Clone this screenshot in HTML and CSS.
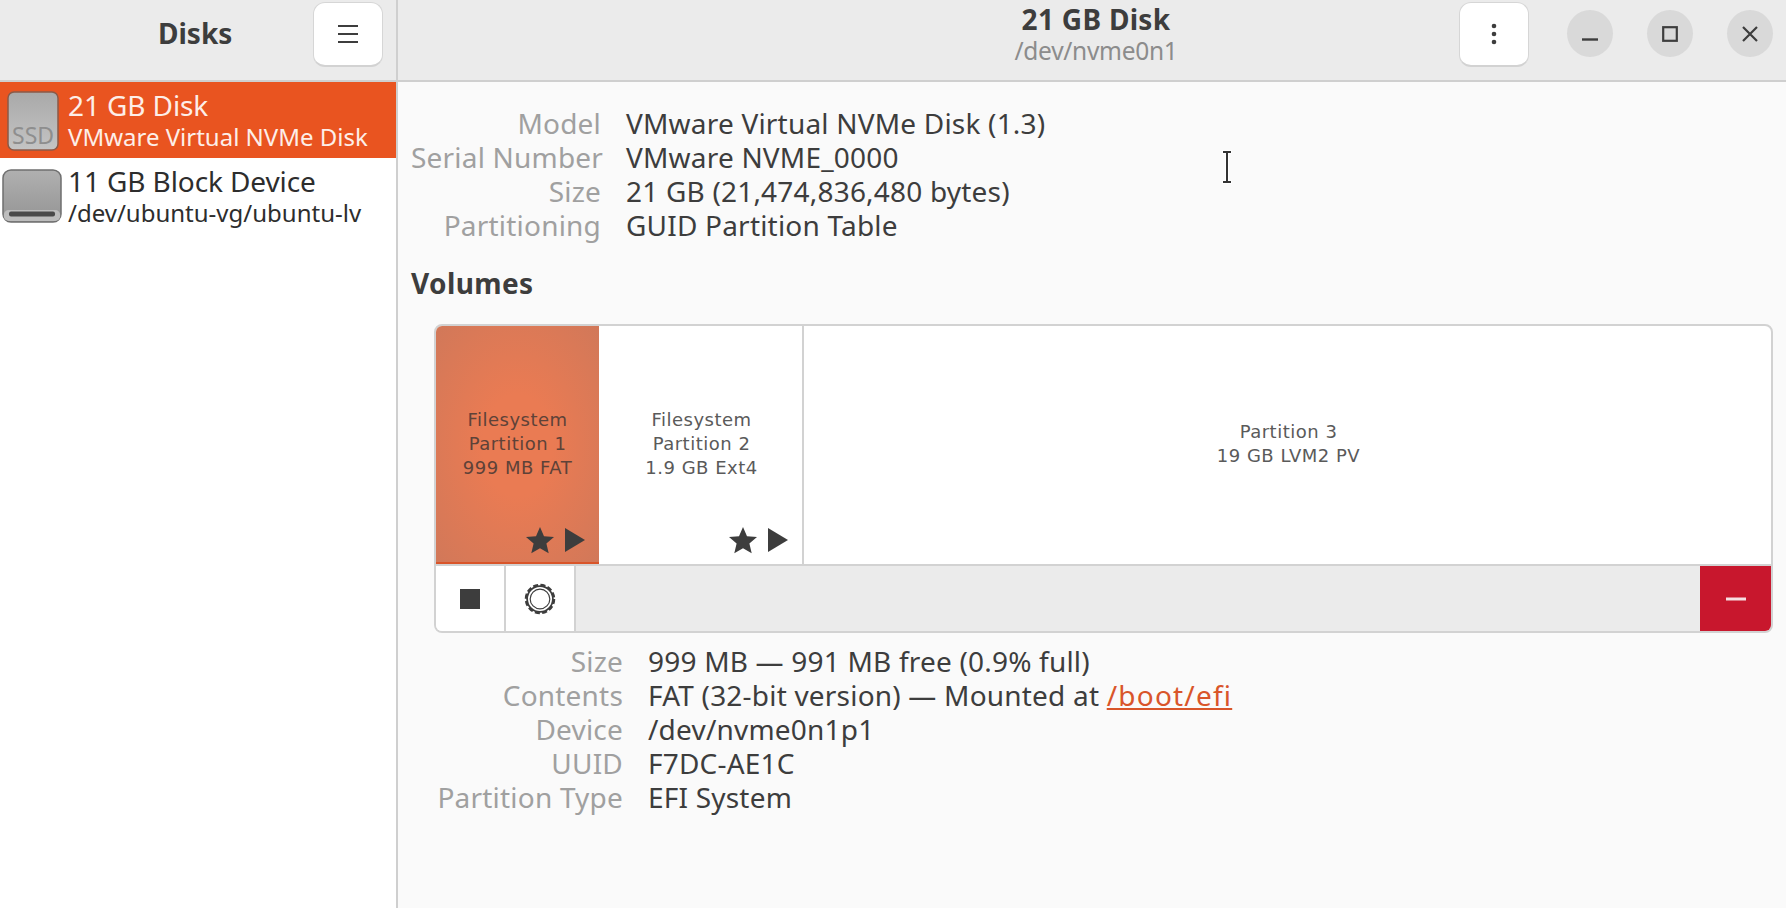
FILE: index.html
```html
<!DOCTYPE html>
<html lang="en">
<head>
<meta charset="utf-8">
<title>Disks</title>
<link rel="stylesheet" href="styles.css">
</head>
<body>
<div class="window">
  <header class="headerbar">
    <div class="head-left">
      <span class="app-title">Disks</span>
      <button class="tool-btn menu-btn" aria-label="Menu">
        <svg width="22" height="20" viewBox="0 0 22 20"><path d="M1 2h20M1 10h20M1 18h20" stroke="#3d3d3d" stroke-width="2.2" fill="none"/></svg>
      </button>
    </div>
    <div class="head-main">
      <div class="head-titles">
        <div class="disk-title">21 GB Disk</div>
        <div class="disk-path">/dev/nvme0n1</div>
      </div>
      <button class="tool-btn kebab-btn" aria-label="More">
        <svg width="6" height="22" viewBox="0 0 6 22"><circle cx="3" cy="3" r="2.3" fill="#3d3d3d"/><circle cx="3" cy="11" r="2.3" fill="#3d3d3d"/><circle cx="3" cy="19" r="2.3" fill="#3d3d3d"/></svg>
      </button>
      <div class="win-controls">
        <span class="win-btn"><svg width="16" height="16" viewBox="0 0 16 16"><path d="M0 13.5h16" stroke="#3d3d3d" stroke-width="2.4"/></svg></span>
        <span class="win-btn"><svg width="16" height="16" viewBox="0 0 16 16"><rect x="1.2" y="1.2" width="13.6" height="13.6" fill="none" stroke="#3d3d3d" stroke-width="2.2"/></svg></span>
        <span class="win-btn"><svg width="16" height="16" viewBox="0 0 16 16"><path d="M1 1l14 14M15 1L1 15" stroke="#3d3d3d" stroke-width="2.2"/></svg></span>
      </div>
    </div>
  </header>
  <div class="body">
    <aside class="sidebar">
      <div class="disk-row selected">
        <svg class="ssd-icon" width="52" height="60" viewBox="0 0 52 60">
          <defs><linearGradient id="ssdg" x1="0" y1="0" x2="0" y2="1"><stop offset="0" stop-color="#a9a9a9"/><stop offset="1" stop-color="#c4c4c4"/></linearGradient></defs>
          <rect x="1" y="1" width="50" height="58" rx="6" fill="url(#ssdg)" stroke="#8a5a48" stroke-width="1.5"/>
        </svg>
        <span class="ssd-label">SSD</span>
        <div class="row-text">
          <div class="row-title">21 GB Disk</div>
          <div class="row-sub">VMware Virtual NVMe Disk</div>
        </div>
      </div>
      <div class="disk-row block">
        <svg class="block-icon" width="60" height="54" viewBox="0 0 60 54">
          <defs><linearGradient id="blkg" x1="0" y1="0" x2="0" y2="1"><stop offset="0" stop-color="#b0b0b0"/><stop offset="1" stop-color="#949494"/></linearGradient></defs>
          <rect x="1" y="1" width="58" height="52" rx="8" fill="url(#blkg)" stroke="#6f6f6f" stroke-width="1.5"/>
          <rect x="1.8" y="41" width="56.4" height="11" rx="5" fill="#bdbdbd"/>
          <rect x="7" y="42.5" width="46" height="5" rx="2" fill="#4a4a4a"/>
        </svg>
        <div class="row-text">
          <div class="row-title">11 GB Block Device</div>
          <div class="row-sub">/dev/ubuntu-vg/ubuntu-lv</div>
        </div>
      </div>
    </aside>
    <main class="content">
      <dl class="props disk-props">
        <dt>Model</dt><dd>VMware Virtual NVMe Disk (1.3)</dd>
        <dt>Serial Number</dt><dd>VMware NVME_0000</dd>
        <dt>Size</dt><dd>21 GB (21,474,836,480 bytes)</dd>
        <dt>Partitioning</dt><dd>GUID Partition Table</dd>
      </dl>
      <h2 class="volumes-title">Volumes</h2>
      <section class="volumes">
        <div class="bars">
          <div class="part part1">
            <div class="part-label">Filesystem<br>Partition 1<br>999 MB FAT</div>
            <div class="part-icons">
              <svg width="30" height="28" viewBox="0 0 30 28"><path d="M15 1l4 9.2 10 .9-7.6 6.5 2.3 9.7L15 22.2 6.300 27.300l2.300-9.700L1 11.100l10-.9z" fill="#3d3d3d"/></svg>
              <svg width="22" height="26" viewBox="0 0 22 26"><path d="M1 1l20 12L1 25z" fill="#3d3d3d"/></svg>
            </div>
          </div>
          <div class="part part2">
            <div class="part-label">Filesystem<br>Partition 2<br>1.9 GB Ext4</div>
            <div class="part-icons">
              <svg width="30" height="28" viewBox="0 0 30 28"><path d="M15 1l4 9.2 10 .9-7.6 6.5 2.3 9.7L15 22.2 6.300 27.300l2.300-9.700L1 11.100l10-.9z" fill="#3d3d3d"/></svg>
              <svg width="22" height="26" viewBox="0 0 22 26"><path d="M1 1l20 12L1 25z" fill="#3d3d3d"/></svg>
            </div>
          </div>
          <div class="part part3">
            <div class="part-label">Partition 3<br>19 GB LVM2 PV</div>
          </div>
        </div>
        <div class="vol-toolbar">
          <button class="vol-btn" aria-label="Stop">
            <svg width="20" height="20" viewBox="0 0 20 20"><rect width="20" height="20" fill="#3d3d3d"/></svg>
          </button>
          <button class="vol-btn" aria-label="Settings">
            <svg width="34" height="34" viewBox="0 0 34 34">
              <circle cx="17" cy="17" r="11.500" fill="none" stroke="#3d3d3d" stroke-width="4.500"/>
              <circle cx="17" cy="17" r="14" fill="none" stroke="#3d3d3d" stroke-width="2.500" stroke-dasharray="5 2.330"/>
              <circle cx="17" cy="17" r="11.200" fill="none" stroke="#fff" stroke-width="1.600"/>
            </svg>
          </button>
          <div class="vol-spacer"></div>
          <button class="vol-btn danger" aria-label="Delete">
            <svg width="20" height="4" viewBox="0 0 20 4"><rect width="20" height="3" y=".5" fill="#f6dfe2"/></svg>
          </button>
        </div>
      </section>
      <dl class="props vol-props">
        <dt>Size</dt><dd>999 MB — 991 MB free (0.9% full)</dd>
        <dt>Contents</dt><dd>FAT (32-bit version) — Mounted at <a class="mount-link" href="#">/boot/efi</a></dd>
        <dt>Device</dt><dd>/dev/nvme0n1p1</dd>
        <dt>UUID</dt><dd>F7DC-AE1C</dd>
        <dt>Partition Type</dt><dd>EFI System</dd>
      </dl>
      <svg class="ibeam" width="14" height="34" viewBox="0 0 14 34"><path d="M2 1.500h10M2 32.500h10M7 2v30" stroke="#fff" stroke-width="4"/><path d="M3 2h8M3 32h8M7 2v30" stroke="#333" stroke-width="2" fill="none"/></svg>
    </main>
  </div>
</div>
</body>
</html>
```
FILE: styles.css
```css
* { box-sizing: border-box; }
html, body { margin: 0; padding: 0; height: 100%; }
body {
  font-family: "Noto Sans", "Open Sans", sans-serif;
  color: #3d3d3d;
  background: #fafafa;
  overflow: hidden;
}
.window { width: 1786px; height: 908px; display: flex; flex-direction: column; }

.headerbar {
  height: 82px;
  flex: none;
  display: flex;
  background: #ebebeb;
  border-bottom: 2px solid #cfcfcf;
}
.head-left {
  width: 398px;
  flex: none;
  display: flex;
  align-items: flex-start;
  padding: 2px 13px 0 0;
  border-right: 2px solid #cfcfcf;
  position: relative;
}
.app-title {
  position: absolute;
  left: 158px;
  top: 15px;
  font-size: 28px;
  font-weight: 700;
  line-height: 36px;
  letter-spacing: 0;
}
.tool-btn {
  width: 70px;
  height: 65px;
  margin: 0;
  padding: 0;
  background: #fff;
  border: 1px solid #d6d6d6;
  border-bottom: 2px solid #d2d2d2;
  border-radius: 12px;
  display: flex;
  align-items: center;
  justify-content: center;
}
.menu-btn { margin-left: auto; }
.head-main {
  flex: 1;
  display: flex;
  align-items: flex-start;
  padding-top: 2px;
  position: relative;
}
.head-titles {
  position: absolute;
  left: 398px;
  width: 600px;
  top: 2px;
  text-align: center;
}
.disk-title { font-size: 28px; font-weight: 700; line-height: 34px; letter-spacing: 0.3px; }
.disk-path { font-size: 24.5px; line-height: 29px; color: #8c8c8c; letter-spacing: -0.3px; }
.kebab-btn { margin-left: 1061px; }
.win-controls { display: flex; gap: 34px; margin: 8px 0 0 38px; }
.win-btn {
  width: 46px;
  height: 47px;
  border-radius: 50%;
  background: #d9d9d9;
  display: flex;
  align-items: center;
  justify-content: center;
}

.body { flex: 1; display: flex; min-height: 0; }
.sidebar {
  width: 398px;
  flex: none;
  background: #fff;
  border-right: 2px solid #cfcfcf;
}
.disk-row {
  display: flex;
  position: relative;
  height: 76px;
}
.selected { background: #e95420; color: #fdeee8; padding: 9px 0 0 7px; }
.block { padding: 11px 0 0 2px; color: #2d2d2d; }
.ssd-label {
  position: absolute;
  left: 12px;
  top: 41px;
  font-size: 23px;
  line-height: 24px;
  color: #8e8e8e;
}
.ssd-icon { flex: none; margin-right: 9px; }
.block-icon { flex: none; margin-right: 6px; }
.row-text { margin-top: -2px; }
.block .row-text { margin-top: -4px; }
.row-title { font-size: 28px; line-height: 32px; letter-spacing: -0.1px; white-space: nowrap; }
.row-sub { font-size: 24px; line-height: 31px; letter-spacing: 0; white-space: nowrap; }

.content { flex: 1; position: relative; padding: 24px 14px 0 13px; min-width: 0; }
.props {
  display: grid;
  margin: 0;
  grid-auto-rows: 34px;
  column-gap: 25px;
  font-size: 28px;
  line-height: 34px;
  letter-spacing: 0.2px;
}
.props dt { text-align: right; color: #a0a0a0; white-space: nowrap; }
.props dd { margin: 0; color: #3d3d3d; white-space: nowrap; }
.disk-props { grid-template-columns: 190px 1fr; }
.volumes-title {
  margin: 24px 0 0;
  font-size: 28px;
  line-height: 34px;
  font-weight: 700;
  letter-spacing: 0.4px;
}
.volumes {
  margin: 24px 0 0 23px;
  height: 309px;
  width: 1339px;
  background: #fff;
  border: 2px solid #d2d2d2;
  border-radius: 8px;
  overflow: hidden;
  display: flex;
  flex-direction: column;
}
.bars { height: 240px; display: flex; flex: none; border-bottom: 2px solid #d2d2d2; font-family: "DejaVu Sans", sans-serif; }
.part { position: relative; display: flex; align-items: center; justify-content: center; text-align: center; padding-bottom: 2px; }
.part-label { font-size: 18px; line-height: 24px; color: #5a5a5a; letter-spacing: 0.5px; }
.part1 {
  width: 163px;
  background: radial-gradient(ellipse at center, #ea7b53 30%, #d17859 100%);
  box-shadow: inset 0 -2px 0 #d9552a;
}
.part1 .part-label { color: #5e4238; }
.part2 { width: 205px; border-right: 2px solid #d2d2d2; }
.part2 .part-label, .part3 .part-label { padding-left: 2px; }
.part3 { flex: 1; }
.part-icons {
  position: absolute;
  right: 13px;
  bottom: 10px;
  display: flex;
  align-items: center;
  gap: 9px;
}
.vol-toolbar { flex: 1; display: flex; background: #ebebeb; }
.vol-btn {
  width: 70px;
  padding: 0;
  margin: 0;
  background: #fff;
  border: 0;
  border-right: 2px solid #d2d2d2;
  display: flex;
  align-items: center;
  justify-content: center;
}
.vol-spacer { flex: 1; }
.danger { background: #c8172d; border: 0; width: 71px; }
.vol-props {
  margin-top: 11px;
  grid-template-columns: 212px 1fr;
}
.mount-link { color: #d9552a; text-decoration: underline; letter-spacing: 1.2px; }
.ibeam { position: absolute; left: 822px; top: 68px; }
```
